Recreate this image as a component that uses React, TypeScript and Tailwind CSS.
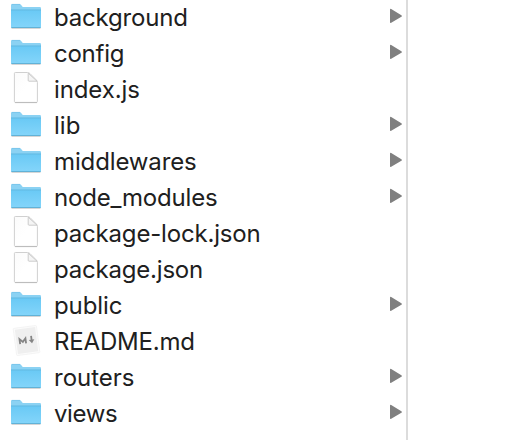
type Kind = 'folder' | 'file' | 'markdown';

const entries: { name: string; kind: Kind; tracking: string }[] = [
  { name: 'background', kind: 'folder', tracking: 'tracking-[-0.18px]' },
  { name: 'config', kind: 'folder', tracking: 'tracking-[-0.25px]' },
  { name: 'index.js', kind: 'file', tracking: 'tracking-[-0.12px]' },
  { name: 'lib', kind: 'folder', tracking: 'tracking-normal' },
  { name: 'middlewares', kind: 'folder', tracking: 'tracking-[-0.13px]' },
  { name: 'node_modules', kind: 'folder', tracking: 'tracking-[-0.2px]' },
  { name: 'package-lock.json', kind: 'file', tracking: 'tracking-[-0.18px]' },
  { name: 'package.json', kind: 'file', tracking: 'tracking-[-0.2px]' },
  { name: 'public', kind: 'folder', tracking: 'tracking-[-0.08px]' },
  { name: 'README.md', kind: 'markdown', tracking: 'tracking-[-0.18px]' },
  { name: 'routers', kind: 'folder', tracking: 'tracking-normal' },
  { name: 'views', kind: 'folder', tracking: 'tracking-[-0.4px]' },
];

function Gradients() {
  return (
    <svg className="absolute h-0 w-0" aria-hidden="true">
      <defs>
        <linearGradient id="folderFront" x1="0" y1="0" x2="0" y2="1">
          <stop offset="0" stopColor="#69c9f5" />
          <stop offset="1" stopColor="#84d5fa" />
        </linearGradient>
        <linearGradient id="paper" x1="0" y1="0" x2="1" y2="1">
          <stop offset="0" stopColor="#fbfbfb" />
          <stop offset=".5" stopColor="#ffffff" />
        </linearGradient>
      </defs>
    </svg>
  );
}

function FolderIcon() {
  return (
    <svg width="32" height="36" viewBox="0 0 32 36">
      <path d="M1.5 29.4h29" stroke="#000" strokeOpacity=".18" strokeWidth="1" />
      <path d="M1 6.2Q1 5 2.2 5H9.5Q10.4 5 11 5.8L12.3 7.5Q12.8 8.1 13.6 8.1H29.8Q31 8.1 31 9.3V12H1Z" fill="#8bd2f3" />
      <path d="M1.8 5.4H10" stroke="#74c1e6" strokeWidth=".7" />
      <path d="M1 10.8H31V28Q31 28.9 30.2 28.9H1.8Q1 28.9 1 28Z" fill="url(#folderFront)" />
      <path d="M1 11H31" stroke="#62b8e0" strokeWidth=".9" />
      <path d="M1.4 28.5H30.6" stroke="#5eaed3" strokeWidth=".9" />
    </svg>
  );
}

function FileIcon() {
  return (
    <svg width="32" height="36" viewBox="0 0 32 36">
      <path d="M5.3 1.5H17.5Q18.8 1.5 20 2.6L26.2 8.8Q27.4 10 27.4 11.3V30.4Q27.4 31.4 26.6 31.4H5.3Q4.4 31.4 4.4 30.4V2.4Q4.4 1.5 5.3 1.5Z" fill="url(#paper)" stroke="#d0d0d0" strokeWidth="1" />
      <path d="M5 31.6H27" stroke="#b8b8b8" strokeWidth=".9" />
      <path d="M18.2 2.2V9.4Q18.2 10.2 19 10.2H27Z" fill="#f5f5f5" stroke="#c6c6c6" strokeWidth=".9" strokeLinejoin="round" />
    </svg>
  );
}

function MarkdownIcon() {
  return (
    <svg width="32" height="36" viewBox="0 0 32 36">
      <g transform="rotate(-7.5 16.5 17.3)">
        <rect x="4.8" y="3.8" width="23.4" height="27.4" rx=".8" fill="#fbfbfb" stroke="#f2f2f2" strokeWidth=".8" />
        <rect x="6.3" y="5.3" width="20.4" height="24.4" fill="#efefef" />
        <path d="M9.7 20.3V15.2L12.7 18.4L15.7 15.2V20.3" fill="none" stroke="#858585" strokeWidth="1.8" />
        <path d="M21.6 13.6V18" stroke="#858585" strokeWidth="1.8" />
        <path d="M18.8 17.2H24.4L21.6 21Z" fill="#858585" />
      </g>
    </svg>
  );
}

function Icon({ kind }: { kind: Kind }) {
  if (kind === 'folder') return <FolderIcon />;
  if (kind === 'file') return <FileIcon />;
  return <MarkdownIcon />;
}

export default function App() {
  return (
    <div className="flex h-[440px] w-[516px] overflow-hidden bg-white font-['Inter',sans-serif] text-[#202020]">
      <Gradients />
      <ul className="-mt-px w-[408px] shrink-0 border-r-2 border-[#dcdcdc]">
        {entries.map((entry) => (
          <li key={entry.name} className="flex h-9 items-center pr-1 pl-2.5">
            <Icon kind={entry.kind} />
            <span className={`ml-3 grow pt-0.5 text-[24px] leading-9 whitespace-nowrap ${entry.tracking}`}>{entry.name}</span>
            {entry.kind === 'folder' && (
              <svg width="12" height="34" viewBox="0 0 12 34" className="mb-0.5">
                <path d="M0 10.8Q0 9.4 1.2 10.1L11.4 16.2Q12.4 17 11.4 17.8L1.2 23.7Q0 24.4 0 23Z" fill="#808080" />
              </svg>
            )}
          </li>
        ))}
      </ul>
    </div>
  );
}
